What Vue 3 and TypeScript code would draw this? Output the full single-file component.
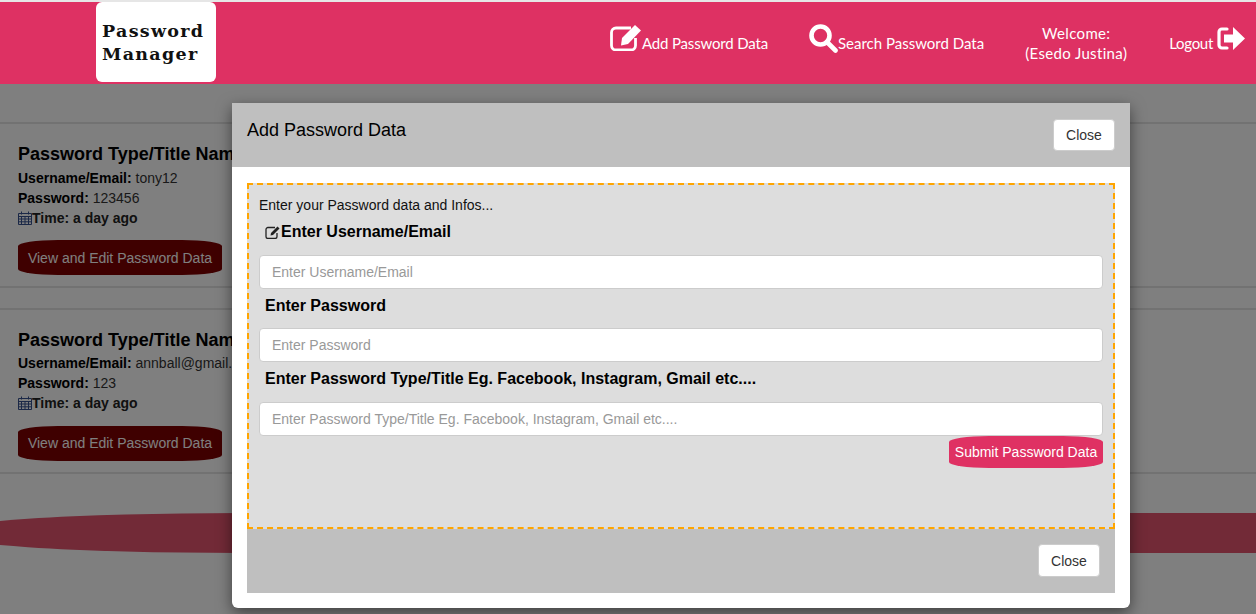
<script setup lang="ts">
interface Entry { user: string; password: string }
const entries: Entry[] = [
  { user: 'tony12', password: '123456' },
  { user: 'annball@gmail.com', password: '123' },
]
const fields: string[] = ['Enter Username/Email', 'Enter Password', 'Enter Password Type/Title Eg. Facebook, Instagram, Gmail etc....']
</script>

<template>
  <div class="page">
    <header class="topbar">
      <div class="logo"><span>Password</span><span>Manager</span></div>
      <nav class="nav">
        <a class="nav-item nav-add">
          <svg viewBox="0 0 32 27" width="32" height="27">
            <path d="M21 4H6a4.500 4.500 0 0 0-4.500 4.500v13A4.500 4.500 0 0 0 6 26h15a4.500 4.500 0 0 0 4.500-4.500V14" fill="none" stroke="#fff" stroke-width="2.800" />
            <path d="M12 14 25 1l6 5.500L18 20l-7 1.500z" fill="#fff" />
          </svg>
          <span class="bottom">Add Password Data</span>
        </a>
        <a class="nav-item">
          <svg viewBox="0 0 29 29" width="29" height="29">
            <circle cx="11.500" cy="11.500" r="9" fill="none" stroke="#fff" stroke-width="4.600" />
            <path d="m18 18 8.500 8.500" stroke="#fff" stroke-width="4.600" stroke-linecap="round" />
          </svg>
          <span class="bottom">Search Password Data</span>
        </a>
        <div class="welcome"><span>Welcome:</span><span>(Esedo Justina)</span></div>
        <a class="nav-item logout">
          <span class="bottom">Logout</span>
          <svg viewBox="0 0 28 23" width="28" height="23">
            <path d="M10 2H5a3 3 0 0 0-3 3v13a3 3 0 0 0 3 3h5" fill="none" stroke="#fff" stroke-width="3.200" stroke-linecap="round" />
            <path d="M7 7.500h9V0l12 11.500L16 23v-7.500H7z" fill="#fff" />
          </svg>
        </a>
      </nav>
    </header>

    <main class="list">
      <article v-for="e in entries" :key="e.user" class="entry">
        <h3>Password Type/Title Name</h3>
        <p><b>Username/Email:</b> {{ e.user }}</p>
        <p><b>Password:</b> {{ e.password }}</p>
        <p class="time">
          <svg viewBox="0 0 14 14" width="14" height="14">
            <path d="M.5 2.500h13v11H.5zM.5 5.500h13M.5 8h13M.5 10.800h13M3.500 5.500v8M7 5.500v8M10.500 5.500v8M3.500 .5v3M10.500 .5v3" fill="none" stroke="#36508f" stroke-width="1" />
          </svg>
          <b>Time: a day ago</b>
        </p>
        <button class="view" type="button">View and Edit Password Data</button>
      </article>
    </main>
    <div class="band"></div>

    <div class="backdrop"></div>

    <section class="modal">
      <div class="modal-head">
        <h4>Add Password Data</h4>
        <button class="close" type="button">Close</button>
      </div>
      <div class="modal-body">
        <form class="form" @submit.prevent>
          <p class="intro">Enter your Password data and Infos...</p>
          <div v-for="(f, i) in fields" :key="f" class="field">
            <label>
              <svg v-if="i === 0" viewBox="0 0 16 14" width="16" height="14">
                <path d="M10 2.500H3a2 2 0 0 0-2 2v7a2 2 0 0 0 2 2h7a2 2 0 0 0 2-2V8" fill="none" stroke="#222" stroke-width="1.300" />
                <path d="M6 8 12.500 1.500l2 2L8 10l-2.500.5z" fill="#222" />
              </svg>{{ f }}
            </label>
            <input type="text" :placeholder="f" />
          </div>
          <div class="submit-row"><button class="submit" type="button">Submit Password Data</button></div>
        </form>
        <div class="modal-foot"><button class="close" type="button">Close</button></div>
      </div>
    </section>
  </div>
</template>

<style>
html, body { margin: 0; background: #fff; overflow: hidden; }
</style>

<style scoped>
.page {
  position: relative;
  width: 1256px;
  height: 614px;
  overflow: hidden;
  font-family: "Liberation Sans", Arial, sans-serif;
  font-size: 14px;
  color: #333;
  background: #fff;
}
.topbar {
  position: relative;
  z-index: 3;
  box-sizing: border-box;
  height: 84px;
  border-top: 2px solid #e6e6e6;
  background: #de3163;
  display: flex;
  align-items: stretch;
  padding: 0 11px 0 96px;
}
.logo {
  width: 120px;
  height: 80px;
  background: #fff;
  border-radius: 6px;
  box-sizing: border-box;
  padding-top: 18px;
  padding-left: 6px;
  display: flex;
  flex-direction: column;
  font-family: "DejaVu Serif", serif;
  font-weight: bold;
  font-size: 17.500px;
  line-height: 23px;
  letter-spacing: 1.300px;
  color: #111;
}
.nav {
  margin-left: auto;
  display: flex;
  align-items: flex-start;
  gap: 41px;
  color: #fff;
  font-family: "Lato", sans-serif;
  font-size: 15px;
}
.nav-item {
  display: flex;
  align-items: flex-end;
  height: 50px;
}
.nav-item svg { margin-top: 22px; flex: none; align-self: flex-start; }
.nav-item .bottom { line-height: 20px; position: relative; top: 1px; }
.nav-add .bottom { letter-spacing: -0.170px; }
.logout { gap: 4px; margin-left: 1px; }
.logout .bottom { letter-spacing: -0.300px; }
.logout svg { margin-top: 25px; }
.welcome {
  display: flex;
  flex-direction: column;
  align-items: center;
  padding-top: 21px;
  line-height: 20px;
  letter-spacing: 0.350px;
}
.list { padding-top: 38px; }
.entry {
  box-sizing: border-box;
  height: 166px;
  margin-bottom: 19.800px;
  padding: 18px 18px 0;
  border-top: 2px solid #e4e4e4;
  border-bottom: 2px solid #e4e4e4;
  color: #333;
}
.entry:last-child { margin-bottom: 0; }
.entry h3 {
  margin: 0 0 1.500px;
  font-size: 18px;
  line-height: 24px;
  font-weight: bold;
  color: #000;
  white-space: nowrap;
}
.entry p { margin: 0; line-height: 20px; }
.entry b { color: #000; }
.time { display: flex; align-items: center; }
.time b { color: #222 !important; }
.view {
  display: block;
  margin-top: 12.700px;
  width: 204px;
  height: 35px;
  border: 0;
  padding: 0;
  background: #7e0000;
  color: #fff;
  font: 14px "Liberation Sans", Arial, sans-serif;
  border-radius: 40px / 6px;
}
.band {
  position: absolute;
  left: -60px;
  right: -300px;
  top: 513px;
  height: 40px;
  background: #e4556f;
  border-radius: 300px / 20px;
}
.backdrop {
  position: absolute;
  inset: 0;
  z-index: 1;
  background: rgba(0, 0, 0, 0.5);
}
.modal {
  position: absolute;
  z-index: 2;
  left: 232px;
  top: 103px;
  width: 898px;
  height: 505px;
  background: #fff;
  border-radius: 0 0 6px 6px;
  box-shadow: 0 5px 15px rgba(0, 0, 0, 0.5);
  color: #000;
}
.modal-head {
  box-sizing: border-box;
  height: 64px;
  background: #bfbfbf;
  padding: 16px 15px 0;
  display: flex;
  justify-content: space-between;
  align-items: flex-start;
}
.modal-head h4 {
  margin: 0;
  font-size: 18px;
  font-weight: normal;
  line-height: 22px;
}
.close {
  box-sizing: border-box;
  width: 62px;
  height: 33px;
  background: #fff;
  border: 1px solid #ccc;
  border-radius: 4px;
  color: #333;
  font: 14px "Liberation Sans", Arial, sans-serif;
  padding: 0;
}
.modal-head .close { height: 32px; }
.modal-body { padding: 16px 15px 15px; }
.form {
  box-sizing: border-box;
  height: 346px;
  padding: 10.400px 10px 0;
  background: #ddd;
  border: 2px dashed orange;
}
.intro { margin: 0; line-height: 20px; color: #111; }
.field label {
  display: flex;
  align-items: center;
  height: 22px;
  margin: 6px 0 11.500px 6px;
  font-size: 16px;
  font-weight: bold;
  color: #000;
}
.field input {
  display: block;
  box-sizing: border-box;
  width: 100%;
  height: 34px;
  padding: 6px 12px;
  background: #fff;
  border: 1px solid #ccc;
  border-radius: 4px;
  font: 14px "Liberation Sans", Arial, sans-serif;
  color: #555;
  outline: none;
}
.field input::placeholder { color: #999; opacity: 1; }
.submit-row { display: flex; justify-content: flex-end; }
.submit {
  box-sizing: border-box;
  width: 154px;
  height: 32px;
  padding: 0;
  border: 0;
  background: #df3163;
  color: #fff;
  font: 14px "Liberation Sans", Arial, sans-serif;
  border-radius: 40px / 6px;
}
.modal-foot {
  box-sizing: border-box;
  height: 64px;
  background: #bfbfbf;
  padding: 15px 15px 0;
  display: flex;
  justify-content: flex-end;
}
</style>
